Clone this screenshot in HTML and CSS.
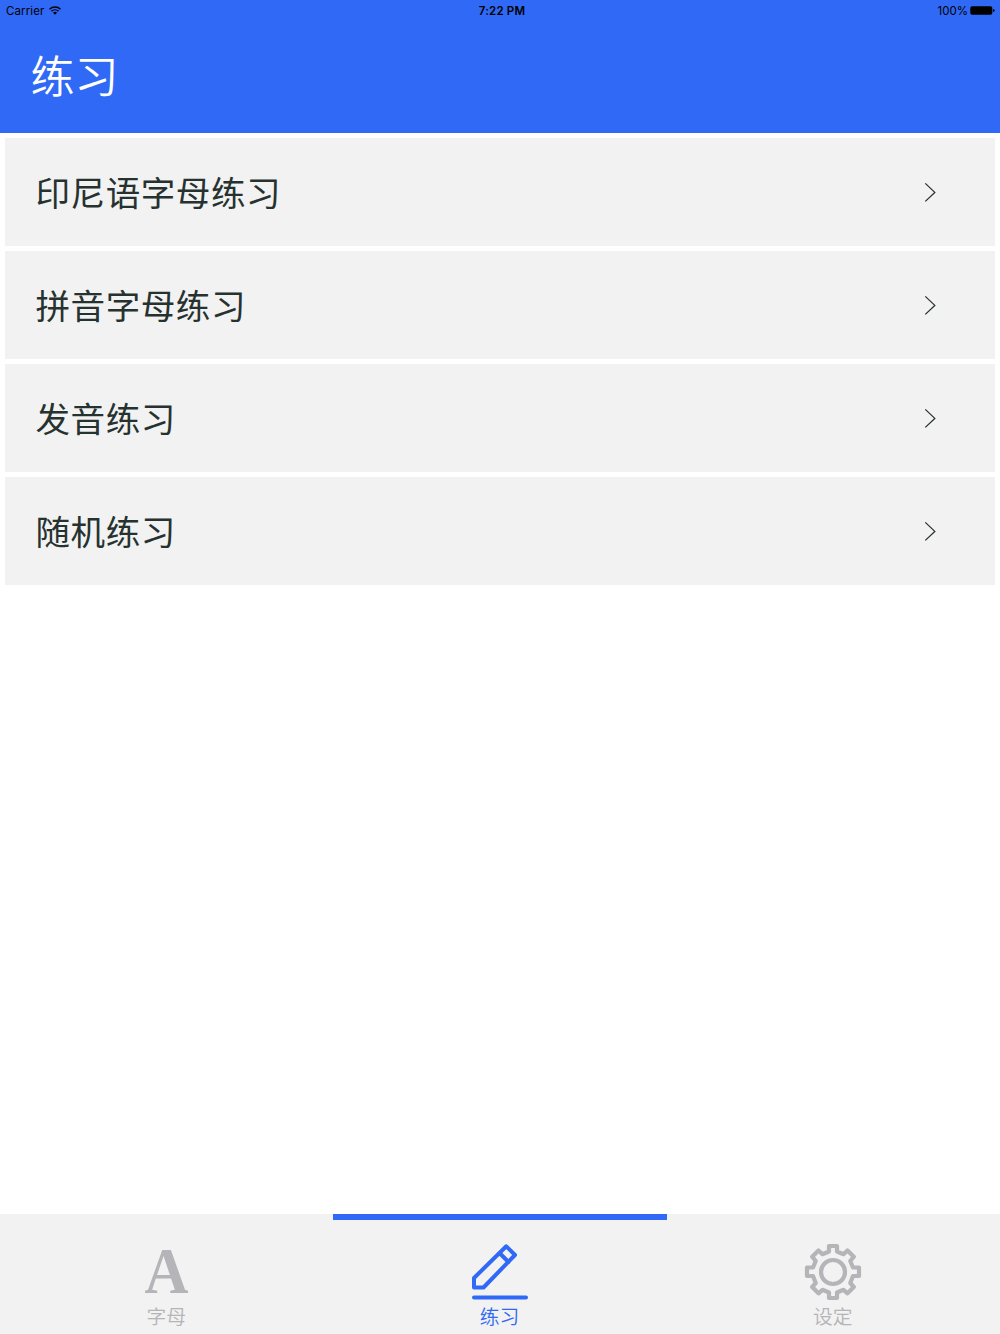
FILE: index.html
```
<!DOCTYPE html>
<html lang="zh-CN">
<head>
    <meta charset="UTF-8">
    <meta name="viewport" content="width=device-width, initial-scale=1.0">
    <title>练习</title>
    <link rel="stylesheet" href="styles.css">
</head>
<body>

    <!-- Header with status bar -->
    <header class="header">
        <div class="status-bar">
            <div class="status-left">
                <span>Carrier</span>
                <svg class="wifi" viewBox="0 0 12 9">
                    <path d="M0.5 3.2a7.8 7.8 0 0 1 11 0M2.5 5.3a5 5 0 0 1 7 0" fill="none" stroke="#000" stroke-width="1.4"/>
                    <path d="M6 8.8L4 6.8a2.9 2.9 0 0 1 4 0z"/>
                </svg>
            </div>
            <div class="status-time">7:22 PM</div>
            <div class="status-right">
                <span>100%</span>
                <svg class="battery" viewBox="0 0 25 10">
                    <rect x="0.3" y="0.2" width="22" height="8.6" rx="1.8"/>
                    <path d="M23 2.9q1.6 0.4 1.6 1.6t-1.6 1.6z"/>
                </svg>
            </div>
        </div>
        <h1>练习</h1>
    </header>

    <!-- Exercise list -->
    <main class="list">
        <a class="row" href="#">
            <span>印尼语字母练习</span>
            <svg class="chevron" viewBox="0 0 12 20"><path d="M1.3 1.4l9.5 9l-9.5 9"/></svg>
        </a>
        <a class="row" href="#">
            <span>拼音字母练习</span>
            <svg class="chevron" viewBox="0 0 12 20"><path d="M1.3 1.4l9.5 9l-9.5 9"/></svg>
        </a>
        <a class="row" href="#">
            <span>发音练习</span>
            <svg class="chevron" viewBox="0 0 12 20"><path d="M1.3 1.4l9.5 9l-9.5 9"/></svg>
        </a>
        <a class="row" href="#">
            <span>随机练习</span>
            <svg class="chevron" viewBox="0 0 12 20"><path d="M1.3 1.4l9.5 9l-9.5 9"/></svg>
        </a>
    </main>

    <!-- Bottom tabs -->
    <nav class="tabs">
        <a class="tab" href="#">
            <svg class="tab-icon" viewBox="0 0 56 56">
                <text class="letter" x="27.5" y="49" text-anchor="middle" textLength="44" lengthAdjust="spacingAndGlyphs">A</text>
            </svg>
            <span>字母</span>
        </a>
        <a class="tab active" href="#">
            <svg class="tab-icon" viewBox="0 0 56 56">
                <path d="M2 43.5V34L34.3 2.3L43 11L11.5 43.5zM27.5 9L36.5 18"/>
                <path d="M2 53.5H54"/>
            </svg>
            <span>练习</span>
        </a>
        <a class="tab" href="#">
            <svg class="tab-icon gear" viewBox="0 0 56 56">
                <path d="M24 2h8v5.5l6.5 2.7l4-3.8l6.3 6.3l-3.5 4.3l2.7 6.5H54v8.5h-6l-2.7 7l3.5 4l-6.3 6.3l-4-3.5l-6.5 2.7V54h-8v-5.5l-6.5-2.7l-4 3.5l-6.3-6.3l3.5-4l-2.7-7H2v-8.5h6l2.7-6.5l-3.5-4.3l6.3-6.3l4 3.8L24 7.5z"/>
                <circle cx="28" cy="28" r="12"/>
            </svg>
            <span>设定</span>
        </a>
    </nav>

</body>
</html>
```

FILE: styles.css
```
* {
    box-sizing: border-box;
}

body {
    margin: 0;
    height: 1334px;
    display: flex;
    flex-direction: column;
    background-color: #fff;
    font-family: "Noto Sans CJK SC", sans-serif;
    overflow: hidden;
}

a {
    text-decoration: none;
}

/* Header Styling */
.header {
    height: 133.4px;
    background-color: #3069f5;
}

.status-bar {
    display: grid;
    grid-template-columns: 1fr auto 1fr;
    align-items: center;
    height: 20px;
    padding: 1px 5px 0 6px;
    font-family: Inter, sans-serif;
    font-size: 11.5px;
    color: #000;
}

.status-left,
.status-right {
    display: flex;
    align-items: center;
}

.status-left {
    gap: 5px;
    letter-spacing: 0.1px;
}

.status-right {
    justify-content: flex-end;
    gap: 2px;
}

.status-time {
    font-weight: 600;
    padding-left: 3px;
    letter-spacing: 0.2px;
}

.wifi {
    width: 12px;
    height: 9px;
}

.battery {
    width: 25px;
    height: 10px;
}

.header h1 {
    margin: 21px 0 0 30.5px;
    font-size: 44px;
    line-height: 66px;
    font-weight: 350;
    color: #fff;
}

/* List Styling */
.list {
    flex: 1;
    display: flex;
    flex-direction: column;
    gap: 5px;
    padding: 5px;
}

.row {
    display: flex;
    align-items: center;
    justify-content: space-between;
    height: 108px;
    padding: 0 59px 0 30.5px;
    background-color: #f2f2f2;
    color: #263230;
    font-size: 34.6px;
    font-weight: 370;
    letter-spacing: 0.5px;
}

.row span {
    padding-bottom: 3px;
}

.chevron {
    width: 12px;
    height: 20px;
    fill: none;
    stroke: #263230;
    stroke-width: 1.3;
}

/* Bottom Tab Styling */
.tabs {
    display: grid;
    grid-template-columns: repeat(3, 1fr);
    height: 120.5px;
    background-color: #f2f2f2;
}

.tab {
    display: flex;
    flex-direction: column;
    align-items: center;
    padding-top: 24.5px;
    border-top: 6px solid transparent;
    color: #b5b4b8;
    font-size: 19.8px;
    line-height: 32px;
    font-weight: 350;
}

.tab span {
    margin-right: 1px;
}

.tab.active {
    color: #3069f5;
    border-top-color: #3069f5;
}

.tab-icon {
    width: 56px;
    height: 56px;
    fill: none;
    stroke: currentColor;
    stroke-width: 4;
    stroke-linecap: round;
    stroke-linejoin: round;
    overflow: visible;
}

.gear {
    stroke-width: 4.2;
}

.letter {
    font-family: "Liberation Serif", serif;
    font-size: 66px;
    font-weight: bold;
    fill: currentColor;
    stroke: none;
}
```
